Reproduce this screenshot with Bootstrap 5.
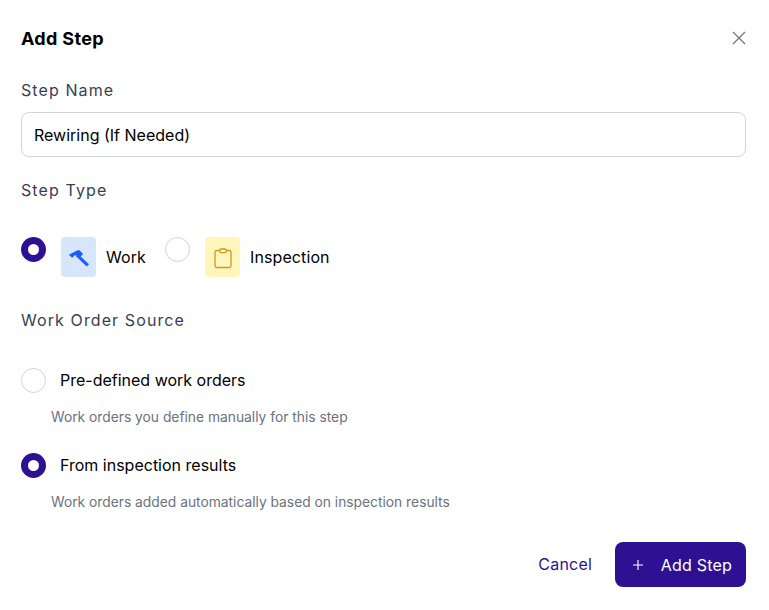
<!doctype html>
<html lang="en"><head><meta charset="utf-8">
<title>Add Step</title>
<link href="https://cdn.jsdelivr.net/npm/bootstrap@5.3.0/dist/css/bootstrap.min.css" rel="stylesheet">
<style>
html,body{background:#fff}
body{font-family:Inter,"Liberation Sans",sans-serif;color:#000;height:610px;overflow:hidden}
.sheet{padding:28px 23px 0 21px}
.ttl{font-size:18px;font-weight:700;line-height:22px;letter-spacing:.33px;margin:0}
.xbtn{background:none;border:0;padding:0;width:16px;height:16px;line-height:0;margin-top:2px;margin-right:-1px}
.lbl{font-size:16px;font-weight:400;line-height:24px;letter-spacing:1.1px;color:#374151;margin:0;display:block}
.lbl1{margin-top:28px}
.inp.form-control{margin-top:10px;height:45px;font-size:16px;color:#000;border:1px solid #d1d5db;border-radius:8px;padding:0 12px}
.lbl2{margin-top:21px}
.types{margin-top:35px;height:40px}
.dot{appearance:none;-webkit-appearance:none;width:25px;height:25px;border-radius:50%;border:1px solid #d1d5db;background:#fff;margin:0;flex:none;display:block}
.dot:checked{border:7.5px solid #2e1193;background:#fff}
.dot2{margin-left:19px}
.tile{width:35px;height:40px;border-radius:4px;display:flex;align-items:center;justify-content:center;flex:none;margin-left:15px}
.tblue{background:#d7e6fd}
.tyel{background:#fef7bb}
.tname{font-size:16px;line-height:24px;margin:0 0 0 10px;color:#000;letter-spacing:.1px;align-self:center}
.lbl3{margin-top:31px}
.srcrow{display:flex;align-items:center;gap:14px;height:26px}
.srcrow span{font-size:16px;line-height:24px;color:#000}
.hint{font-size:13.8px;line-height:20px;color:#6b7280;margin:14px 0 0 30px}
.s1{margin-top:35px}
.s2{margin-top:25px}
.foot{margin-top:30px;gap:23px}
.cancel{color:#2e1193;font-size:16px;font-weight:400;padding:0 0 2px;border:0;background:none;line-height:24px;letter-spacing:.2px}
.add.btn{background:#2e1193;border:0;border-radius:8px;color:#fff;height:45px;width:131px;font-size:16px;font-weight:400;letter-spacing:.2px;padding:0 14px 0 18px;display:flex;align-items:center;justify-content:space-between}
</style></head>
<body>
<div class="sheet">
  <div class="d-flex justify-content-between align-items-start">
    <h1 class="ttl">Add Step</h1>
    <button class="xbtn" type="button" aria-label="Close"><svg width="16" height="16" viewBox="0 0 16 16" fill="none" stroke="#6b7280" stroke-width="1.2"><path d="M2 2 14 14M14 2 2 14"/></svg></button>
  </div>
  <label class="lbl lbl1" for="nm">Step Name</label>
  <input id="nm" class="form-control inp" type="text" value="Rewiring (If Needed)">
  <div class="lbl lbl2">Step Type</div>
  <div class="types d-flex align-items-start">
    <input class="dot" type="radio" name="t" checked aria-label="Work">
    <div class="tile tblue"><svg width="22" height="22" viewBox="0 0 22 22" fill="#1a5cff"><path d="M.8 8.800 9.500 4.200H11.500L15 8 12.800 10.500 10 9.800 6.800 9.300 4.200 11.800Z"/><path d="M9.800 7.800 21 18.300 18.700 20.500 7.800 10Z"/></svg></div>
    <p class="tname">Work</p>
    <input class="dot dot2" type="radio" name="t" aria-label="Inspection">
    <div class="tile tyel"><svg width="20" height="24" viewBox="0 0 20 24" fill="none" stroke="#d4961c" stroke-width="1.300"><path d="M6.500 5.500H3.800C2.500 5.500 2 6.300 2 7.500V20.700C2 21.900 2.700 22.500 3.800 22.500H16.200C17.300 22.500 18 21.900 18 20.700V7.500C18 6.300 17.500 5.500 16.200 5.500H13.500"/><rect x="6.500" y="4" width="7" height="3.600" rx="1.800"/></svg></div>
    <p class="tname">Inspection</p>
  </div>
  <div class="lbl lbl3">Work Order Source</div>
  <label class="srcrow s1"><input class="dot" type="radio" name="s"><span>Pre-defined work orders</span></label>
  <p class="hint">Work orders you define manually for this step</p>
  <label class="srcrow s2"><input class="dot" type="radio" name="s" checked><span>From inspection results</span></label>
  <p class="hint">Work orders added automatically based on inspection results</p>
  <div class="foot d-flex justify-content-end align-items-center">
    <button class="cancel" type="button">Cancel</button>
    <button class="btn add" type="button"><svg width="10" height="10" viewBox="0 0 10 10" stroke="#fff" stroke-width="1.100"><path d="M5 0V10M0 5H10"/></svg><span>Add Step</span></button>
  </div>
</div>
<script src="https://cdn.jsdelivr.net/npm/bootstrap@5.3.0/dist/js/bootstrap.bundle.min.js"></script>
</body></html>
